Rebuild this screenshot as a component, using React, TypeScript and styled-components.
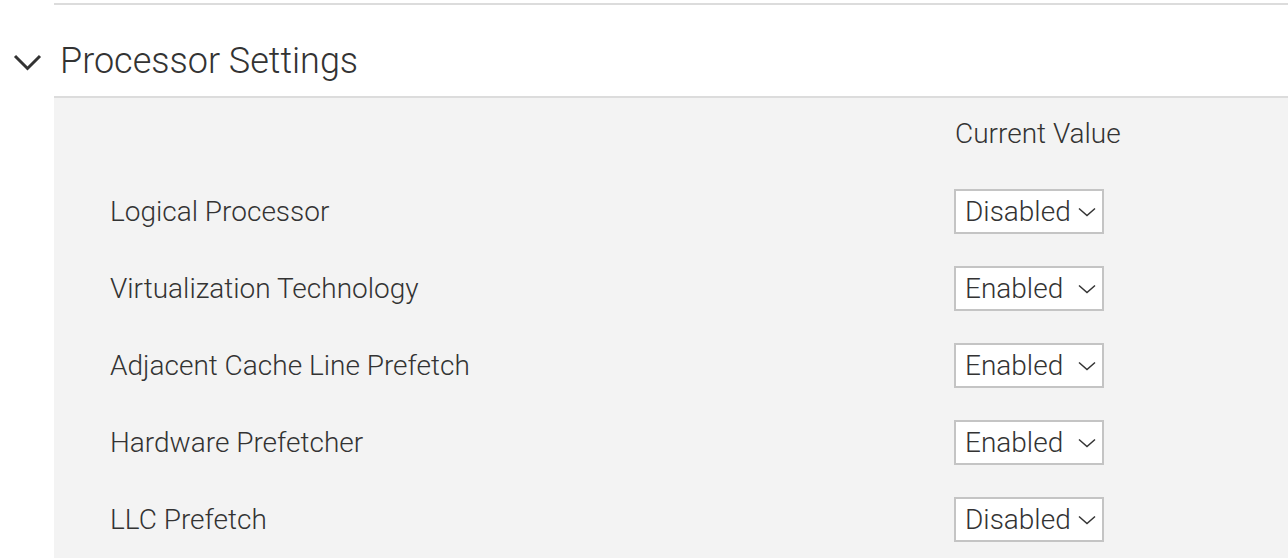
import React from "react";
import styled, { createGlobalStyle } from "styled-components";

const Global = createGlobalStyle`
  html, body { margin: 0; padding: 0; background: #ffffff; }
  body { font-family: Roboto, "Noto Sans", "Liberation Sans", sans-serif; font-weight: 300; color: #333333; }
`;

const Page = styled.div`
  width: 1288px;
  height: 558px;
  overflow: hidden;
  padding-top: 3px;
  box-sizing: border-box;
`;

const TopRule = styled.div`
  margin-left: 54px;
  border-top: 2px solid #dcdcdc;
`;

const Header = styled.div`
  box-sizing: border-box;
  display: flex;
  align-items: center;
  height: 91px;
  padding: 23px 0 0 13px;
  gap: 18px;
`;

const Title = styled.h2`
  margin: 0;
  font-size: 36px;
  font-weight: 300;
  color: #333333;
  letter-spacing: 0;
  line-height: 1.2;
`;

const Panel = styled.div`
  margin-left: 54px;
  border-top: 2px solid #dcdcdc;
  background: #f3f3f3;
  padding-left: 56px;
  display: grid;
  grid-template-columns: 844px auto;
  grid-auto-rows: 77px;
  grid-template-rows: 75px;
  align-items: center;
  height: 462px;
  align-content: start;
`;

const ColHead = styled.div`
  font-size: 28px;
  color: #333333;
  padding: 0 0 5px 1px;
`;

const Label = styled.div`
  font-size: 28px;
  color: #333333;
`;

const SelectBox = styled.div`
  width: 150px;
  height: 45px;
  box-sizing: border-box;
  border: 2px solid #c4c4c4;
  background: #ffffff;
  display: flex;
  align-items: center;
  justify-content: space-between;
  padding: 0 6px 0 9px;
  font-size: 28px;
  color: #333333;
`;

const Chevron = () => (
  <svg width="18" height="10" viewBox="0 0 18 10" fill="none">
    <polyline points="1,1.5 9,8.5 17,1.5" stroke="#333" strokeWidth="1.5" />
  </svg>
);

const rows: [string, string][] = [
  ["Logical Processor", "Disabled"],
  ["Virtualization Technology", "Enabled"],
  ["Adjacent Cache Line Prefetch", "Enabled"],
  ["Hardware Prefetcher", "Enabled"],
  ["LLC Prefetch", "Disabled"],
];

export default function App() {
  return (
    <Page>
      <Global />
      <TopRule />
      <Header>
        <svg width="29" height="17" viewBox="0 0 29 17" fill="none">
          <polyline points="2,2 14.5,14.5 27,2" stroke="#333" strokeWidth="3" />
        </svg>
        <Title>Processor Settings</Title>
      </Header>
      <Panel>
        <div />
        <ColHead>Current Value</ColHead>
        {rows.map(([l, v]) => (
          <React.Fragment key={l}>
            <Label>{l}</Label>
            <SelectBox>
              <span>{v}</span>
              <Chevron />
            </SelectBox>
          </React.Fragment>
        ))}
      </Panel>
    </Page>
  );
}
